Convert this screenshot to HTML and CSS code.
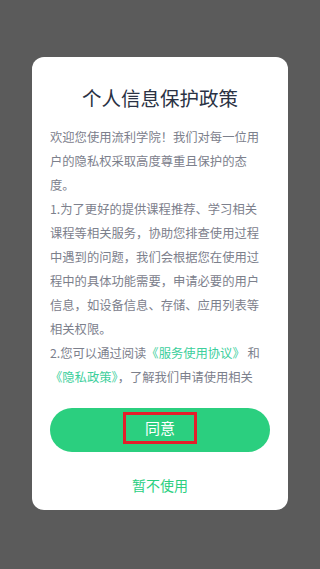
FILE: index.html
```html
<!DOCTYPE html>
<html lang="zh">
<head>
<meta charset="utf-8">
<link rel="stylesheet" href="styles.css">
</head>
<body>
<div class="card">
  <h1 class="title">个人信息保护政策</h1>
  <div class="content">
    <p>欢迎您使用流利学院！我们对每一位用户的隐私权采取高度尊重且保护的态度。</p>
    <p>1.为了更好的提供课程推荐、学习相关课程等相关服务，协助您排查使用过程中遇到的问题，我们会根据您在使用过程中的具体功能需要，申请必要的用户信息，如设备信息、存储、应用列表等相关权限。</p>
    <p>2.您可以通过阅读<span class="link">《服务使用协议》</span> 和<br><span class="link">《隐私政策》</span>，了解我们申请使用相关</p>
  </div>
  <div class="agree"><span class="agree-label">同意</span></div>
  <div class="cancel">暂不使用</div>
</div>
</body>
</html>
```

FILE: styles.css
```css
html, body {
  margin: 0;
  padding: 0;
}
body {
  width: 320px;
  height: 569px;
  background: #5b5b5b;
  font-family: "Noto Sans CJK SC", "Noto Sans", sans-serif;
  overflow: hidden;
}
.card {
  box-sizing: border-box;
  width: 256px;
  height: 453px;
  margin: 57px 0 0 32px;
  background: #fff;
  border-radius: 12px;
  padding: 27px 18px 0;
  display: flex;
  flex-direction: column;
}
.title {
  margin: 0;
  font-size: 19.5px;
  font-weight: 400;
  line-height: 28px;
  color: #2a3244;
  text-align: center;
}
.content {
  margin-top: 13px;
  width: 213px;
  height: 264px;
  overflow: hidden;
  font-size: 12.3px;
  line-height: 24px;
  color: #7c808c;
}
.content p {
  margin: 0;
}
.link {
  color: #3ccf9c;
}
.agree {
  margin-top: 19px;
  height: 44px;
  border-radius: 22px;
  background: #2bcf7f;
  display: flex;
  align-items: center;
  justify-content: center;
}
.agree-label {
  box-sizing: border-box;
  width: 74px;
  height: 32px;
  margin-top: -4px;
  border: 3px solid #e41e2a;
  color: #fff;
  font-size: 15px;
  line-height: 26px;
  text-align: center;
}
.cancel {
  margin-top: 22px;
  line-height: 22px;
  font-size: 14px;
  color: #2bcf7f;
  text-align: center;
}
```
